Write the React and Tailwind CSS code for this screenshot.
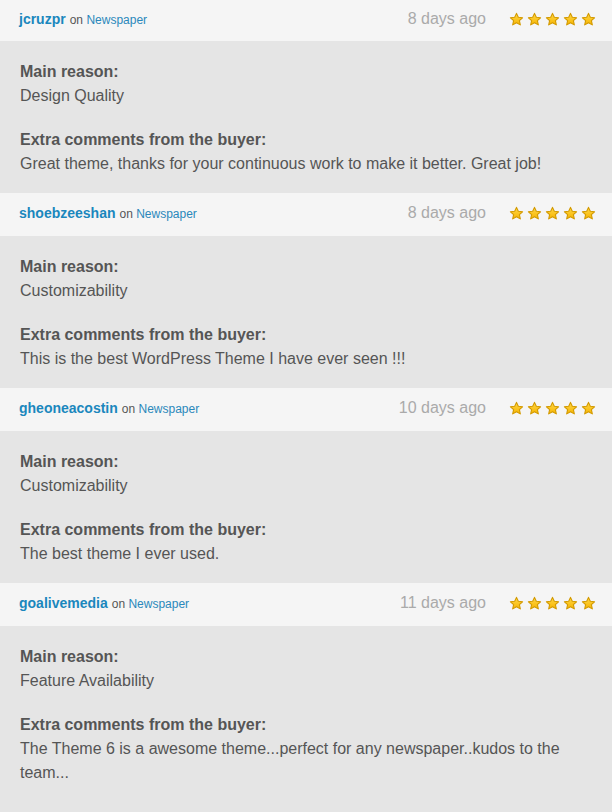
import React from "react";

const REVIEWS = [
  {
    user: "jcruzpr",
    ago: "8 days ago",
    reason: "Design Quality",
    comment:
      "Great theme, thanks for your continuous work to make it better. Great job!",
  },
  {
    user: "shoebzeeshan",
    ago: "8 days ago",
    reason: "Customizability",
    comment: "This is the best WordPress Theme I have ever seen !!!",
  },
  {
    user: "gheoneacostin",
    ago: "10 days ago",
    reason: "Customizability",
    comment: "The best theme I ever used.",
  },
  {
    user: "goalivemedia",
    ago: "11 days ago",
    reason: "Feature Availability",
    comment:
      "The Theme 6 is a awesome theme...perfect for any newspaper..kudos to the team...",
  },
];

function Star() {
  return (
    <svg width="15" height="15" viewBox="0 0 24 24">
      <defs>
        <linearGradient id="starfill" x1="0" y1="0" x2="0" y2="1">
          <stop offset="0" stopColor="#ffd84a" />
          <stop offset="1" stopColor="#f7b500" />
        </linearGradient>
      </defs>
      <path
        d="M12 2.2l2.9 6.3 6.8.7-5.1 4.6 1.5 6.8L12 17.1l-6.1 3.5 1.5-6.8-5.1-4.6 6.8-.7z"
        fill="url(#starfill)"
        stroke="#d39a00"
        strokeWidth="1.8"
        strokeLinejoin="round"
      />
    </svg>
  );
}

function Review({ review, first }) {
  return (
    <div>
      <div
        className={`flex items-center justify-between ${
          first ? "h-[41px]" : "h-[43px]"
        } bg-[#f5f5f5] pl-[19px] pr-[16px] pb-[3px]`}
      >
        <div className="flex items-baseline gap-[4px]">
          <span className="text-[14px] font-bold text-[#1a87bd]">
            {review.user}
          </span>
          <span className="text-[12px] text-[#555]">
            on <span className="text-[#2a88bb]">Newspaper</span>
          </span>
        </div>
        <div className="flex items-center">
          <span className="text-[16px] text-[#aaa] mr-[23px]">
            {review.ago}
          </span>
          <div className="flex gap-[3px]">
            <Star />
            <Star />
            <Star />
            <Star />
            <Star />
          </div>
        </div>
      </div>
      <div className="bg-[#e5e5e5] px-[20px] pt-[19px] pb-[17px] text-[16px] leading-[24px] text-[#555]">
        <div className="font-bold">Main reason:</div>
        <div>{review.reason}</div>
        <div className="font-bold mt-[20px]">Extra comments from the buyer:</div>
        <div>{review.comment}</div>
      </div>
    </div>
  );
}

export default function App() {
  return (
    <div
      className="w-[612px] min-h-[812px] bg-[#e5e5e5]"
      style={{ fontFamily: '"Liberation Sans", Arial, sans-serif' }}
    >
      {REVIEWS.map((r, i) => (
        <Review key={r.user} review={r} first={i === 0} />
      ))}
    </div>
  );
}
